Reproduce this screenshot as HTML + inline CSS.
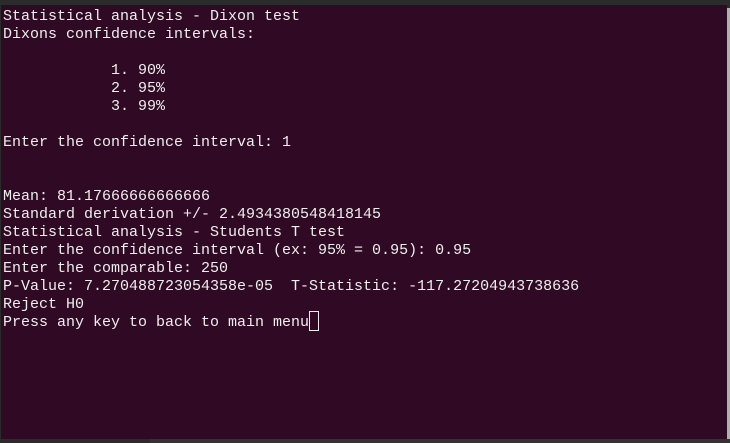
<!DOCTYPE html>
<html><head><meta charset="utf-8"><style>
html,body{margin:0;padding:0;width:730px;height:443px;overflow:hidden;background:#2b2b2b;}
#t{position:absolute;left:1px;top:5px;width:726px;height:434px;background:#300a24;}
#sb{position:absolute;left:727px;top:8px;width:3px;height:431px;background:#b0b0b0;}
pre{position:absolute;left:3px;top:8px;margin:0;font-family:"Liberation Mono",monospace;font-size:15px;line-height:18px;color:#eeeeec;}
#cur{position:absolute;left:309px;top:311px;width:8px;height:18px;border:1px solid #eeeeec;}
#bot{position:absolute;left:150px;top:439px;width:580px;height:4px;background:#333;}
</style></head><body>
<div id="t"></div><div id="sb"></div><div id="bot"></div>
<pre>Statistical analysis - Dixon test
Dixons confidence intervals:

            1. 90%
            2. 95%
            3. 99%

Enter the confidence interval: 1


Mean: 81.17666666666666
Standard derivation +/- 2.4934380548418145
Statistical analysis - Students T test
Enter the confidence interval (ex: 95% = 0.95): 0.95
Enter the comparable: 250
P-Value: 7.270488723054358e-05  T-Statistic: -117.27204943738636
Reject H0
Press any key to back to main menu</pre>
<div id="cur"></div>
</body></html>
